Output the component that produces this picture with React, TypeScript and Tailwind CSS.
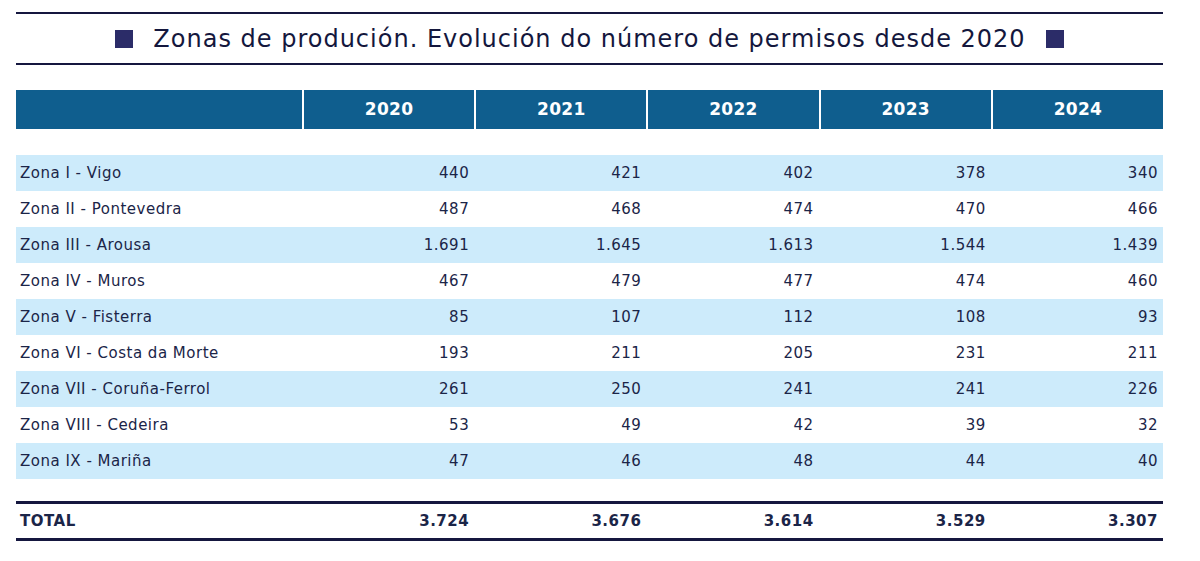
import React from 'react';

const years = ['2020', '2021', '2022', '2023', '2024'];

const rows: [string, string[]][] = [
  ['Zona I - Vigo', ['440', '421', '402', '378', '340']],
  ['Zona II - Pontevedra', ['487', '468', '474', '470', '466']],
  ['Zona III - Arousa', ['1.691', '1.645', '1.613', '1.544', '1.439']],
  ['Zona IV - Muros', ['467', '479', '477', '474', '460']],
  ['Zona V - Fisterra', ['85', '107', '112', '108', '93']],
  ['Zona VI - Costa da Morte', ['193', '211', '205', '231', '211']],
  ['Zona VII - Coruña-Ferrol', ['261', '250', '241', '241', '226']],
  ['Zona VIII - Cedeira', ['53', '49', '42', '39', '32']],
  ['Zona IX - Mariña', ['47', '46', '48', '44', '40']],
];

const totals = ['3.724', '3.676', '3.614', '3.529', '3.307'];

const cols = 'grid grid-cols-[286px_repeat(5,1fr)] gap-x-[2px]';

export default function App() {
  return (
    <div className="w-[1200px] h-[561px] bg-white text-[#1b2548] font-['DejaVu_Sans',sans-serif] pl-[16px] pr-[37px] pt-[12px]">
      <div className="border-t-[2px] border-b-[2px] border-[#15173f] h-[53px] flex items-center justify-center gap-[20px]">
        <span className="w-[18px] h-[18px] bg-[#2b2c68]" />
        <h1 className="text-[24px] text-[#14173d] tracking-[1px]">
          Zonas de produción. Evolución do número de permisos desde 2020
        </h1>
        <span className="w-[18px] h-[18px] bg-[#2b2c68]" />
      </div>

      <div className={`${cols} mt-[25px] h-[39px]`}>
        <div className="bg-[#0f5e8e]" />
        {years.map((y) => (
          <div key={y} className="bg-[#0f5e8e] text-white font-bold text-[17px] tracking-[0.3px] flex items-center justify-center">
            {y}
          </div>
        ))}
      </div>

      <div className="mt-[26px]">
        {rows.map(([name, vals], i) => (
          <div
            key={name}
            className={`${cols} h-[36px] items-center text-[15px] tracking-[0.5px] ${i % 2 === 0 ? 'bg-[#cdebfb]' : 'bg-white'}`}
          >
            <div className="pl-[4px]">{name}</div>
            {vals.map((v, j) => (
              <div key={j} className="text-right pr-[5px]">
                {v}
              </div>
            ))}
          </div>
        ))}
      </div>

      <div className={`${cols} mt-[22px] h-[40px] items-center border-t-[3px] border-b-[3px] border-[#15173f] font-bold text-[15px] tracking-[0.5px]`}>
        <div className="pl-[4px]">TOTAL</div>
        {totals.map((v, j) => (
          <div key={j} className="text-right pr-[5px]">
            {v}
          </div>
        ))}
      </div>
    </div>
  );
}
